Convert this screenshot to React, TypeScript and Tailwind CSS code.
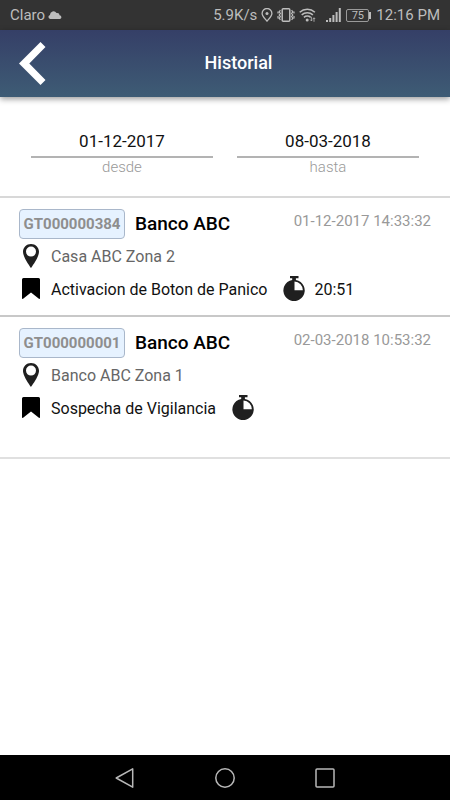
import React from "react";

type Entry = {
  id: string;
  client: string;
  date: string;
  place: string;
  event: string;
  elapsed?: string;
};

const entries: Entry[] = [
  {
    id: "GT000000384",
    client: "Banco ABC",
    date: "01-12-2017 14:33:32",
    place: "Casa ABC Zona 2",
    event: "Activacion de Boton de Panico",
    elapsed: "20:51",
  },
  {
    id: "GT000000001",
    client: "Banco ABC",
    date: "02-03-2018 10:53:32",
    place: "Banco ABC Zona 1",
    event: "Sospecha de Vigilancia",
  },
];

function PinIcon() {
  return (
    <svg viewBox="0 0 16 24" className="h-6 w-4 shrink-0" fill="#1f1f1f" aria-hidden="true">
      <path
        fillRule="evenodd"
        d="M8 0C3.5 0 0 3.4 0 7.8 0 13.600 8 24 8 24s8-10.400 8-16.200C16 3.400 12.500 0 8 0Zm0 12.600a5 5 0 1 1 0-10 5 5 0 0 1 0 10Z"
      />
    </svg>
  );
}

function BookmarkIcon() {
  return (
    <svg viewBox="0 0 18 21" className="h-[21px] w-[18px] shrink-0" fill="#000" aria-hidden="true">
      <path d="M1.500 0h15A1.500 1.500 0 0 1 18 1.500V20.200c0 .7-.6 1-1.100.6L9 14.600 1.100 20.800C.6 21.200 0 20.900 0 20.200V1.500A1.500 1.500 0 0 1 1.500 0Z" />
    </svg>
  );
}

function StopwatchIcon() {
  return (
    <svg viewBox="0 0 22 25" className="h-[25px] w-[22px] shrink-0" fill="#1f1f1f" aria-hidden="true">
      <path
        fillRule="evenodd"
        d="M7 0h8.500v2.200h-2.600v1.700A10.700 10.700 0 1 1 9.200 3.900V2.200H7ZM11.500 5.400v8.900h8.300a8.600 8.600 0 0 0-8.300-8.900Z"
      />
    </svg>
  );
}

function StatusBar() {
  return (
    <div className="flex h-[30px] items-center bg-[#333333] px-[10px] text-[15px] text-[#bdbdbd]">
      <span>Claro</span>
      <svg viewBox="0 0 14 8" className="ml-[3px] h-2 w-[14px]" fill="#bdbdbd" aria-hidden="true">
        <path d="M2.200 8A2.100 2.100 0 0 1 2 3.900 3.500 3.500 0 0 1 8.500 2 2.600 2.600 0 0 1 11.600 4.300 1.900 1.900 0 0 1 12.100 8Z" />
      </svg>
      <span className="ml-auto">5.9K/s</span>
      <svg viewBox="0 0 12 14" className="ml-1 h-[14px] w-3" fill="none" stroke="#bdbdbd" strokeWidth="1.300" aria-hidden="true">
        <path d="M6 13.200C4 10.600 1.100 8 1.100 5.400a4.900 4.900 0 0 1 9.800 0C10.900 8 8 10.600 6 13.200Z" />
        <circle cx="6" cy="5.500" r="1.500" fill="#bdbdbd" stroke="none" />
      </svg>
      <svg viewBox="0 0 18 14" className="ml-1 h-[14px] w-[18px]" fill="none" stroke="#bdbdbd" strokeWidth="1.200" aria-hidden="true">
        <rect x="5.200" y=".8" width="7.600" height="12.400" rx="1" strokeWidth="1.500" />
        <path d="M3.400 2.200 2.200 3.900 3.400 5.500 2.200 7l1.200 1.600-1.200 1.600 1.200 1.600M1 3.500v2M1 8v2.500M14.600 2.200l1.200 1.700-1.200 1.600L15.800 7l-1.200 1.600 1.200 1.600-1.200 1.600M17 3.500v2M17 8v2.500" />
      </svg>
      <svg viewBox="0 0 17 14" className="ml-1 h-[14px] w-[17px]" fill="none" stroke="#bdbdbd" strokeWidth="1.500" aria-hidden="true">
        <path d="M.7 4.200a11.500 11.500 0 0 1 15.200 0M2.700 6.900a8.300 8.300 0 0 1 11.200 0M4.900 9.400a5.100 5.100 0 0 1 6.800 0" />
        <circle cx="8.200" cy="12" r="1.500" fill="#bdbdbd" stroke="none" />
        <path d="M12.400 8.800v4M15 9.800v4M11.200 11.600l1.200 1.300 1.200-1.300M13.800 11l1.200-1.200 1.200 1.200" strokeWidth=".8" />
      </svg>
      <svg viewBox="0 0 15 14" className="ml-[10px] h-[14px] w-[15px]" fill="#bdbdbd" aria-hidden="true">
        <path d="M0 12h2v2H0ZM3.200 10h2v4h-2ZM6.400 7h2v7h-2ZM9.600 4h2v10h-2ZM12.800 0h2v14h-2Z" />
      </svg>
      <span className="ml-[5px] flex h-[13px] w-[23px] items-center justify-center rounded-[2px] border border-[#9a9a9a] text-[11px] leading-none">
        75
      </span>
      <span className="h-[7px] w-[2px] bg-[#bdbdbd]" />
      <span className="ml-[5px]">12:16 PM</span>
    </div>
  );
}

function DateField({ id, label, value }: { id: string; label: string; value: string }) {
  return (
    <div className="min-w-0 flex-1">
      <input
        id={id}
        type="text"
        defaultValue={value}
        className="block h-[30px] w-full border-b-2 border-[#b3b3b3] bg-transparent pb-0.5 text-center text-[17px] text-[#111111] outline-none"
      />
      <label htmlFor={id} className="block text-center text-[15px] leading-[18px] font-light text-[#999999]">
        {label}
      </label>
    </div>
  );
}

function EntryRow({ entry, last }: { entry: Entry; last: boolean }) {
  return (
    <li
      className={
        last
          ? "border-b-2 border-[#e0e0e0] px-[19px] pt-[11px] pb-8"
          : "border-b-2 border-[#c8c8c8] px-[19px] pt-[11px] pb-[9px]"
      }
    >
      <div className="flex h-[30px] items-center">
        <span className="flex h-[30px] w-[106px] items-center justify-center rounded-[4px] border border-[#a9b7ca] bg-[#e6f2ff] text-[15px] font-bold text-[#8e8e8e]">
          {entry.id}
        </span>
        <h2 className="ml-[10px] text-[19px] font-medium text-black">{entry.client}</h2>
        <time className="ml-auto self-start text-[15px] leading-6 text-[#999999]">{entry.date}</time>
      </div>
      <div className="mt-0.5 flex h-8 items-center">
        <span className="flex w-6 justify-center pb-[3px]">
          <PinIcon />
        </span>
        <span className="ml-2 text-base text-[#666666]">{entry.place}</span>
      </div>
      <div className="mt-px flex h-8 items-center">
        <span className="flex w-6 justify-center pb-[3px]">
          <BookmarkIcon />
        </span>
        <span className="ml-2 text-base text-[#111111]">{entry.event}</span>
        <span className="ml-4 pb-[3px]">
          <StopwatchIcon />
        </span>
        <span className="ml-[9px] text-base text-[#111111]">{entry.elapsed}</span>
      </div>
    </li>
  );
}

export default function App() {
  return (
    <div className="flex min-h-screen flex-col bg-white font-[Roboto,sans-serif]">
      <StatusBar />
      <header className="flex h-[67px] items-center bg-linear-to-b from-[#353f67] to-[#3e5c75] px-[19px] shadow-[0_2px_6px_rgba(0,0,0,0.4)]">
        <button type="button" aria-label="Volver">
          <svg viewBox="0 0 27 43" className="h-[43px] w-[27px]" fill="#fff" aria-hidden="true">
            <path d="M21.500 0 26.500 5 10.300 21.500 26.500 38 21.500 43 0 21.500Z" />
          </svg>
        </button>
        <h1 className="flex-1 pb-0.5 text-center text-lg font-medium text-white">Historial</h1>
      </header>
      <main className="flex-1">
        <form className="flex gap-6 border-b-2 border-[#d8d8d8] px-[31px] pt-[31px] pb-5">
          <DateField id="desde" label="desde" value="01-12-2017" />
          <DateField id="hasta" label="hasta" value="08-03-2018" />
        </form>
        <ul>
          {entries.map((entry, i) => (
            <EntryRow key={entry.id} entry={entry} last={i === entries.length - 1} />
          ))}
        </ul>
      </main>
      <nav className="flex h-[45px] items-center justify-center gap-20 bg-black">
        <button type="button" aria-label="Atrás" className="size-5">
          <svg viewBox="0 0 20 20" fill="none" stroke="#b8b8b8" strokeWidth="1.500" strokeLinejoin="round" aria-hidden="true">
            <path d="M17.700.8v18.400L1.200 10Z" />
          </svg>
        </button>
        <button type="button" aria-label="Inicio" className="size-5">
          <svg viewBox="0 0 20 20" fill="none" stroke="#b8b8b8" strokeWidth="1.500" aria-hidden="true">
            <circle cx="10" cy="10" r="9.200" />
          </svg>
        </button>
        <button type="button" aria-label="Recientes" className="size-5">
          <svg viewBox="0 0 20 20" fill="none" stroke="#b8b8b8" strokeWidth="1.500" aria-hidden="true">
            <rect x="1" y="1" width="18" height="18" rx="1" />
          </svg>
        </button>
      </nav>
    </div>
  );
}
